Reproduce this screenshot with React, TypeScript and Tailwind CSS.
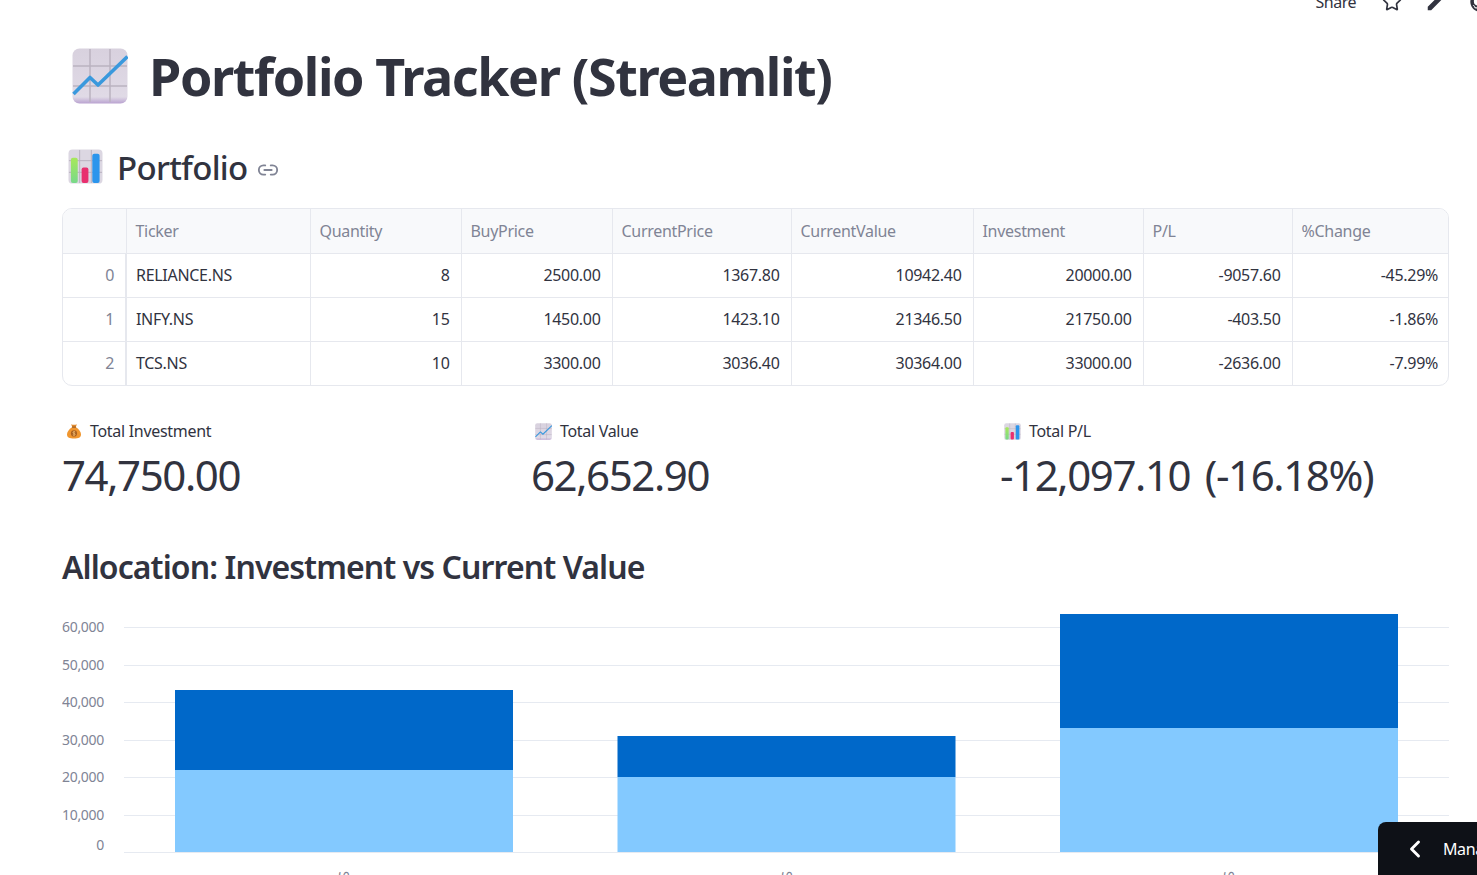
import { Star, Link2, ChevronLeft } from 'lucide-react';
import { FaGithub } from 'react-icons/fa';
import { MdEdit } from 'react-icons/md';

const columns = [
  { name: '', width: 'w-[63px]' },
  { name: 'Ticker', width: 'w-[184px]' },
  { name: 'Quantity', width: 'w-[151px]' },
  { name: 'BuyPrice', width: 'w-[151px]' },
  { name: 'CurrentPrice', width: 'w-[179px]' },
  { name: 'CurrentValue', width: 'w-[182px]' },
  { name: 'Investment', width: 'w-[170px]' },
  { name: 'P/L', width: 'w-[149px]' },
  { name: '%Change', width: 'w-[158px]' },
];

const rows = [
  ['0', 'RELIANCE.NS', '8', '2500.00', '1367.80', '10942.40', '20000.00', '-9057.60', '-45.29%'],
  ['1', 'INFY.NS', '15', '1450.00', '1423.10', '21346.50', '21750.00', '-403.50', '-1.86%'],
  ['2', 'TCS.NS', '10', '3300.00', '3036.40', '30364.00', '33000.00', '-2636.00', '-7.99%'],
];

const gridLines = [
  { label: '60,000', y: 24, labelY: 29 },
  { label: '50,000', y: 62, labelY: 67 },
  { label: '40,000', y: 99, labelY: 104 },
  { label: '30,000', y: 137, labelY: 142 },
  { label: '20,000', y: 174, labelY: 179 },
  { label: '10,000', y: 212, labelY: 217 },
  { label: '0', y: 249, labelY: 247 },
];

const bars = [
  { x: 113, width: 338, top: 87, split: 167, tick: 'RELIANCE.NS', tickX: 287 },
  { x: 555.5, width: 338, top: 133, split: 174, tick: 'INFY.NS', tickX: 730 },
  { x: 998, width: 338, top: 11, split: 125, tick: 'TCS.NS', tickX: 1172 },
];

function ChartEmoji({ className }: { className?: string }) {
  return (
    <svg viewBox="0 0 56 56" className={className}>
      <defs>
        <linearGradient id="chartBg" x1="0" y1="0" x2="0" y2="1">
          <stop offset="0" stopColor="#d8d1de" />
          <stop offset="0.88" stopColor="#e0dae6" />
          <stop offset="1" stopColor="#b9a2d0" />
        </linearGradient>
      </defs>
      <rect x="0.5" y="0.5" width="55" height="55" rx="7" fill="url(#chartBg)" />
      <path d="M18 1V54M38 1V54M1 18H55M1 38H55" stroke="#bab2c0" strokeWidth="1.5" fill="none" />
      <path d="M1.5 46L18 29.5L26 37L55.5 8.5" stroke="#3a99dd" strokeWidth="3.6" strokeLinejoin="round" fill="none" />
    </svg>
  );
}

function BarsEmoji({ className }: { className?: string }) {
  return (
    <svg viewBox="0 0 36 36" className={className}>
      <defs>
        <linearGradient id="barGreen" x1="0" y1="0" x2="0" y2="1">
          <stop offset="0" stopColor="#a8e85a" />
          <stop offset="1" stopColor="#78d98a" />
        </linearGradient>
      </defs>
      <rect x="0.5" y="0.5" width="35" height="35" rx="4" fill="#dcd7e2" />
      <path d="M12 1V35M24 1V35M1 12H35M1 24H35" stroke="#b9b1bf" strokeWidth="1" fill="none" />
      <rect x="3" y="9" width="7" height="26" rx="2" fill="url(#barGreen)" />
      <rect x="14" y="19" width="7" height="16" rx="2" fill="#e8306f" />
      <rect x="25" y="5" width="7.5" height="30" rx="2" fill="#2b95ec" />
    </svg>
  );
}

function MoneyEmoji({ className }: { className?: string }) {
  return (
    <svg viewBox="0 0 16 16" className={className}>
      <path d="M5.2 1.2C6.5 2 9.5 2 10.8 1.2L9.8 4.2H6.2Z" fill="#e08a2e" />
      <path d="M6 4.2H10C13 6 15 9 15 11.5C15 14.5 12.5 15.5 8 15.5C3.5 15.5 1 14.5 1 11.5C1 9 3 6 6 4.2Z" fill="#f0962f" />
      <rect x="6" y="3.6" width="4" height="1.2" rx="0.5" fill="#9c5a1f" />
      <circle cx="8" cy="10.4" r="3.1" fill="#a9601f" />
      <path d="M9.2 9C8.4 8.4 7 8.6 7 9.6C7 10.8 9.2 10.1 9.2 11.3C9.2 12.3 7.6 12.4 6.8 11.8M8 7.9V12.9" stroke="#f5c27a" strokeWidth="0.7" fill="none" />
    </svg>
  );
}

function Metric({ icon, label, value, className }: { icon: React.ReactNode; label: string; value: string; className: string }) {
  return (
    <div className={className}>
      <div className="flex h-[24px] items-center gap-[8px] pl-[4px] text-[16px] leading-[24px] tracking-[-0.3px]">
        {icon}
        <span>{label}</span>
      </div>
      <div className="mt-[2px] text-[42px] leading-[60px] font-normal tracking-[-1.4px] [word-spacing:5px]">{value}</div>
    </div>
  );
}

export default function App() {
  return (
    <div
      className="relative h-[875px] overflow-hidden bg-white text-[#31333f]"
      style={{ fontFamily: '"Noto Sans", "Open Sans", sans-serif' }}
    >
      {/* toolbar, cut by the top of the window */}
      <div className="-mt-[10px] flex h-[24px] items-center justify-end text-[#31333f]">
        <span className="mr-[26px] text-[16px] tracking-[-0.5px]">Share</span>
        <Star size={20} strokeWidth={2} className="mr-[23px]" />
        <MdEdit size={22} className="mr-[23px]" />
        <FaGithub size={20} className="-mr-[13px]" />
      </div>

      <main className="pr-[28px] pl-[62px]">
        <h1 className="mt-[20px] flex h-[84px] items-center pl-[10px] text-[52px] leading-[84px] font-bold tracking-[-1.4px]">
          <ChartEmoji className="mr-[21px] h-[56px] w-[56px] shrink-0" />
          Portfolio Tracker (Streamlit)
        </h1>

        <h2 className="mt-[25px] flex h-[50px] items-center pl-[6px] text-[33px] leading-[50px] font-medium tracking-[-0.7px]">
          <BarsEmoji className="mr-[14px] -mt-[4px] h-[35px] w-[35px] shrink-0" />
          Portfolio
          <Link2 size={22} className="mt-[4px] ml-[9px] text-[#808495]" />
        </h2>

        <div className="mt-[15px] overflow-hidden rounded-[10px] border border-[#e6e8ee]">
          <table className="w-full table-fixed border-collapse text-[16px] tracking-[-0.3px]">
            <colgroup>
              {columns.map((col, i) => (
                <col key={i} className={col.width} />
              ))}
            </colgroup>
            <thead>
              <tr className="h-[44px] bg-[#f8f9fb] text-[#808495]">
                {columns.map((col, i) => (
                  <th key={i} className="border-l border-[#e6e8ee] px-[9px] text-left font-normal first:border-l-0">
                    {col.name}
                  </th>
                ))}
              </tr>
            </thead>
            <tbody>
              {rows.map((row) => (
                <tr key={row[0]} className="h-[44px] border-t border-[#e6e8ee]">
                  {row.map((cell, i) => (
                    <td
                      key={i}
                      className={
                        i === 0
                          ? 'px-[11px] text-right text-[#808495]'
                          : i === 1
                            ? 'border-l-2 border-[#e6e8ee] px-[9px]'
                            : i === 8
                              ? 'border-l border-[#e6e8ee] pr-[12px] pl-[11px] text-right'
                              : 'border-l border-[#e6e8ee] px-[11px] text-right'
                      }
                    >
                      {cell}
                    </td>
                  ))}
                </tr>
              ))}
            </tbody>
          </table>
        </div>

        <div className="mt-[33px] flex">
          <Metric
            className="w-[469px]"
            icon={<MoneyEmoji className="h-[16px] w-[16px]" />}
            label="Total Investment"
            value="74,750.00"
          />
          <Metric
            className="w-[469px]"
            icon={<ChartEmoji className="h-[17px] w-[17px]" />}
            label="Total Value"
            value="62,652.90"
          />
          <Metric
            className="flex-1"
            icon={<BarsEmoji className="h-[17px] w-[17px]" />}
            label="Total P/L"
            value="-12,097.10 (-16.18%)"
          />
        </div>

        <h3 className="mt-[37px] h-[50px] text-[32px] leading-[50px] font-semibold tracking-[-0.92px]">
          Allocation: Investment vs Current Value
        </h3>

        <svg viewBox="0 0 1387 272" className="mt-[11px] block h-[272px] w-[1387px]" style={{ overflow: 'hidden' }}>
          {gridLines.map((line) => (
            <g key={line.label}>
              <line x1="62" x2="1387" y1={line.y + 0.5} y2={line.y + 0.5} stroke="#e6eaf1" />
              <text x="42" y={line.labelY} textAnchor="end" fontSize="14" letterSpacing="-0.3" fill="#808495">
                {line.label}
              </text>
            </g>
          ))}
          {bars.map((bar) => (
            <g key={bar.tick}>
              <rect x={bar.x} y={bar.top} width={bar.width} height={bar.split - bar.top} fill="#0068c9" />
              <rect x={bar.x} y={bar.split} width={bar.width} height={249 - bar.split} fill="#83c9ff" />
              <text
                transform={`translate(${bar.tickX} 268) rotate(-90)`}
                textAnchor="end"
                fontSize="14"
                fill="#808495"
              >
                {bar.tick}
              </text>
            </g>
          ))}
        </svg>
      </main>

      {/* manage app tab */}
      <div className="absolute top-[822px] left-[1378px] flex h-[53px] w-[200px] items-center rounded-tl-[8px] bg-[#0e1117] pl-[23px] text-white">
        <ChevronLeft size={28} strokeWidth={2.5} className="shrink-0" />
        <span className="ml-[14px] text-[16px] tracking-[-0.4px] whitespace-nowrap">Manage app</span>
      </div>
    </div>
  );
}
